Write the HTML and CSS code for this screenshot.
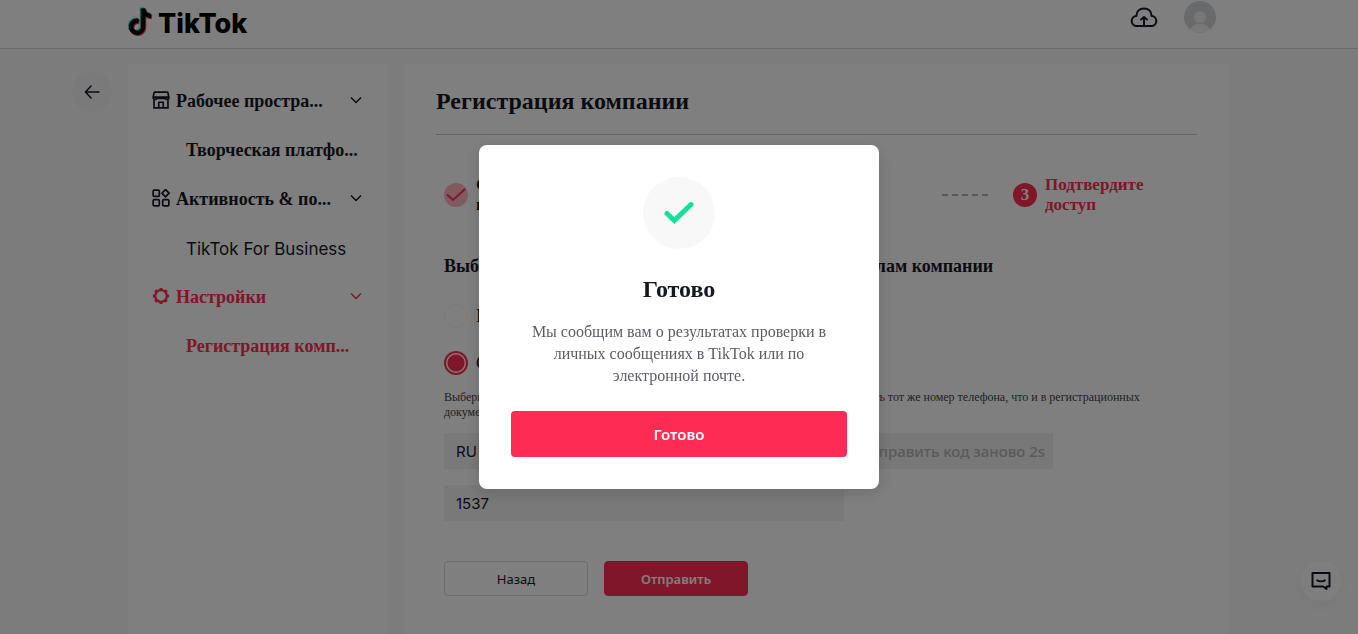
FILE: index.html
```html
<!DOCTYPE html>
<html lang="ru">
<head>
  <meta charset="UTF-8">
  <meta name="viewport" content="width=device-width, initial-scale=1.0">
  <title>TikTok - Регистрация компании</title>
  <link rel="stylesheet" href="styles.css">
</head>
<body>
  <header class="header">
    <a href="#" class="logo">
      <svg width="26" height="30" viewBox="0 0 26 30" fill="none" stroke-width="4.500">
        <g stroke="#25f4ee"><path d="M9.500 13a6 6 0 1 0 4.500 6V.5c.5 4.500 3.500 7 8 7.500"/></g>
        <g stroke="#fe2c55"><path d="M11.500 15a6 6 0 1 0 4.500 6V2.500c.5 4.500 3.500 7 8 7.500"/></g>
        <g stroke="#000"><path d="M10.500 14a6 6 0 1 0 4.500 6V1.500c.5 4.500 3.500 7 8 7.500"/></g>
      </svg>
      <span>TikTok</span>
    </a>
    <div class="header-right">
      <a href="#" class="upload" aria-label="Загрузить">
        <svg width="28" height="22" viewBox="0 0 28 22" fill="none" stroke="#161823" stroke-width="2" stroke-linecap="round" stroke-linejoin="round">
          <path d="M7 19a5 5 0 0 1-.6-10C6.500 4.500 9.500 1.500 14 1.500s7.500 3 7.600 7.500A5 5 0 0 1 21 19z"/>
          <path d="M14 18v-8M11 12.500 14 10l3 2.500"/>
        </svg>
      </a>
      <a href="#" class="avatar" aria-label="Профиль">
        <svg width="32" height="32" viewBox="0 0 32 32">
          <circle cx="16" cy="16" r="16" fill="#d2d4d6"/>
          <circle cx="16" cy="16" r="6" fill="#f1f1f2"/>
          <path d="M6 28.500c2-4 6-5.500 10-5.500s8 1.500 10 5.500a16 16 0 0 1-20 0z" fill="#f1f1f2"/>
        </svg>
      </a>
    </div>
  </header>

  <div class="layout">
    <button type="button" class="back" aria-label="Назад">
      <svg width="16" height="14" viewBox="0 0 16 14" fill="none" stroke="#161823" stroke-width="1.500" stroke-linecap="round" stroke-linejoin="round"><path d="M15 7H1.500M7 1 1.500 7 7 13"/></svg>
    </button>

    <nav class="sidebar">
      <a href="#" class="nav-item">
        <svg class="nav-icon" viewBox="0 0 16 16" fill="none" stroke="currentColor" stroke-width="1.500" stroke-linejoin="round"><path d="M2 1h12l1 4.500H1zM1 5.500c0 2.500 3.500 2.500 3.500 0M11.500 5.500c0 2.500 3.500 2.500 3.500 0M4.500 6.500h7M1.800 7.500V15h12.400V7.500M6 15v-5h4v5"/></svg>
        <span class="nav-text">Рабочее простра...</span>
        <svg class="chevron" viewBox="0 0 12 8" fill="none" stroke="currentColor" stroke-width="1.500"><path d="M1 1.500 6 6.500l5-5"/></svg>
      </a>
      <a href="#" class="nav-item sub"><span class="nav-text">Творческая платфо...</span></a>
      <a href="#" class="nav-item">
        <svg class="nav-icon" viewBox="0 0 16 16" fill="none" stroke="currentColor" stroke-width="1.500"><rect x="1" y="1" width="5.500" height="5.500" rx="1"/><path d="M12 .5 15.200 3.700 12 7 8.800 3.700z"/><rect x="1" y="9.500" width="5.500" height="5.500" rx="1"/><rect x="9.500" y="9.500" width="5.500" height="5.500" rx="1"/></svg>
        <span class="nav-text">Активность &amp; по...</span>
        <svg class="chevron" viewBox="0 0 12 8" fill="none" stroke="currentColor" stroke-width="1.500"><path d="M1 1.500 6 6.500l5-5"/></svg>
      </a>
      <a href="#" class="nav-item sub latin"><span class="nav-text">TikTok For Business</span></a>
      <a href="#" class="nav-item active">
        <svg class="nav-icon" viewBox="0 0 16 16" fill="none" stroke="currentColor"><circle cx="8" cy="8" r="5.200" stroke-width="2"/><path d="M8 .8v2M8 13.200v2M.8 8h2M13.200 8h2M2.900 2.900l1.400 1.400M11.700 11.700l1.400 1.400M2.900 13.100l1.400-1.400M11.700 4.300l1.400-1.400" stroke-width="2.600"/></svg>
        <span class="nav-text">Настройки</span>
        <svg class="chevron" viewBox="0 0 12 8" fill="none" stroke="currentColor" stroke-width="1.500"><path d="M1 1.500 6 6.500l5-5"/></svg>
      </a>
      <a href="#" class="nav-item sub active"><span class="nav-text">Регистрация комп...</span></a>
    </nav>

    <main class="content">
      <h1>Регистрация компании</h1>

      <form class="form">
        <ol class="steps">
          <li class="step">
            <span class="step-mark done"><svg width="20" height="14" viewBox="0 0 20 14" fill="none" stroke="#fe2c55" stroke-width="2"><path d="M1 6.500 7 12 19 1"/></svg></span>
            <span>Сведения<br>компании</span>
          </li>
          <li class="dashes"></li>
          <li class="step middle">
            <span class="step-mark done"><svg width="20" height="14" viewBox="0 0 20 14" fill="none" stroke="#fe2c55" stroke-width="2"><path d="M1 6.500 7 12 19 1"/></svg></span>
            <span>Загрузите<br>документы</span>
          </li>
          <li class="dashes"></li>
          <li class="step current">
            <span class="step-mark">3</span>
            <span>Подтвердите доступ</span>
          </li>
        </ol>

        <h2>Выберите способ подтверждения доступа к всем отделам компании</h2>

        <label class="option"><input type="radio" name="method"> По почте</label>
        <label class="option"><input type="radio" name="method" checked> С помощью СМС</label>

        <p class="note">Выберите номер мобильного телефона для получения кода. Необходимо использовать тот же номер телефона, что и в регистрационных документах.</p>

        <div class="phone-row">
          <input type="text" class="field" value="RU +7" aria-label="Номер телефона">
          <button type="button" class="resend" disabled>Отправить код заново 2s</button>
        </div>
        <input type="text" class="field" value="1537" aria-label="Код подтверждения">

        <div class="actions">
          <button type="button" class="btn">Назад</button>
          <button type="button" class="btn primary">Отправить</button>
        </div>
      </form>
    </main>
  </div>

  <button type="button" class="feedback" aria-label="Обратная связь">
    <svg width="20" height="20" viewBox="0 0 20 20" fill="none" stroke="#161823" stroke-width="2" stroke-linejoin="round"><path d="M1.500 2h17v13.500h-3V18L12 15.500H1.500z"/><path d="M5.500 9c2.500 1.800 6.500 1.800 9 0"/></svg>
  </button>

  <!-- Success popup -->
  <div class="overlay">
    <div class="modal" role="dialog" aria-modal="true" aria-labelledby="modal-title">
      <div class="modal-icon">
        <svg width="32" height="24" viewBox="0 0 32 24" fill="none" stroke="#13e09b" stroke-width="5" stroke-linecap="round" stroke-linejoin="miter"><path d="M4 12.500 11.300 19.500 28 3.500"/></svg>
      </div>
      <h2 id="modal-title" class="modal-title">Готово</h2>
      <p class="modal-text">Мы сообщим вам о результатах проверки в личных сообщениях в TikTok или по электронной почте.</p>
      <button type="button" class="modal-btn">Готово</button>
    </div>
  </div>
</body>
</html>
```
FILE: styles.css
```css
* {
  box-sizing: border-box;
}

body {
  margin: 0;
  min-height: 100vh;
  display: flex;
  flex-direction: column;
  background: #f8f8f8;
  color: #161823;
  font-family: 'Liberation Serif', 'Times New Roman', serif;
}

a {
  color: inherit;
  text-decoration: none;
}

button,
input {
  font-family: 'Noto Sans', sans-serif;
}

/* Header */
.header {
  display: flex;
  justify-content: space-between;
  height: 49px;
  padding: 0 142px 0 128px;
  background: #fff;
  border-bottom: 1px solid #d8d8d8;
}

.logo {
  display: flex;
  align-items: center;
  gap: 4px;
  padding-bottom: 4px;
  color: #000;
  font: 800 27px/30px Inter, sans-serif;
}

.logo span {
  padding-top: 3px;
}

.header-right {
  display: flex;
  gap: 26px;
}

.upload {
  padding-top: 7px;
}

.avatar {
  padding-top: 1px;
}

/* Page layout */
.layout {
  flex: 1;
  display: flex;
  gap: 16px;
  padding: 15px 129px 0 72px;
}

.back {
  display: flex;
  align-items: center;
  justify-content: center;
  width: 40px;
  height: 40px;
  margin-top: 8px;
  border: none;
  border-radius: 50%;
  background: #f4f4f4;
}

.sidebar {
  width: 260px;
  padding: 13px 24px;
  background: #fff;
}

.nav-item {
  display: flex;
  align-items: center;
  gap: 6px;
  height: 49px;
  font-size: 18px;
  font-weight: bold;
}

.nav-icon {
  flex: none;
  width: 18px;
  height: 18px;
  margin-bottom: 4px;
}

.nav-text {
  flex: 1;
  overflow: hidden;
  white-space: nowrap;
  text-overflow: ellipsis;
}

.chevron {
  flex: none;
  width: 12px;
  height: 8px;
  margin: 0 2px 4px 0;
}

.sub {
  padding-left: 34px;
}

.latin {
  font: 17px Inter, sans-serif;
}

.active {
  color: #fe2c55;
}

/* Content */
.content {
  flex: 1;
  padding: 0 32px;
  background: #fff;
}

h1 {
  margin: 0;
  padding: 22px 0 18px;
  border-bottom: 1px solid #c8c8c8;
  font-size: 24px;
  line-height: 30px;
}

.form {
  padding: 40px 8px;
}

.steps {
  display: flex;
  align-items: center;
  gap: 23px;
  margin: 0;
  padding: 0;
  list-style: none;
  font-size: 17px;
  font-weight: bold;
  line-height: 20px;
}

.step {
  display: flex;
  align-items: center;
  gap: 8px;
  width: 176px;
}

.middle {
  flex: 1;
}

.step-mark {
  flex: none;
  display: flex;
  align-items: center;
  justify-content: center;
  width: 24px;
  height: 24px;
  border-radius: 50%;
  background: #fe2c55;
  color: #fff;
}

.done {
  background: #ffb4c3;
}

.current {
  color: #fe2c55;
}

.dashes {
  width: 48px;
  height: 2px;
  background: repeating-linear-gradient(90deg, #b0b0b0 0 6px, transparent 6px 10px);
}

.form h2 {
  margin: 39px 0 26px;
  font-size: 18px;
  line-height: 24px;
}

.option {
  display: flex;
  align-items: center;
  gap: 8px;
  height: 24px;
  margin-bottom: 23px;
  font-size: 18px;
}

.option input {
  appearance: none;
  width: 24px;
  height: 24px;
  margin: 0;
  border: 2px solid #fafafa;
  border-radius: 50%;
}

.option input:checked {
  border-color: #fe2c55;
  background: radial-gradient(circle, #fe2c55 8px, #fff 9px);
}

.note {
  margin: -8px 0 13px;
  color: #444;
  font-size: 12px;
  line-height: 15px;
}

.phone-row {
  display: flex;
  gap: 8px;
  margin-bottom: 16px;
}

.field {
  width: 400px;
  height: 36px;
  padding: 0 12px;
  border: none;
  background: #f3f3f3;
  color: #161823;
  font-family: Inter, sans-serif;
  font-size: 15px;
}

.resend {
  height: 36px;
  padding: 0 8px;
  border: none;
  background: #f0f0f0;
  color: #b4b4b4;
  font-size: 15px;
  font-weight: 500;
}

.actions {
  display: flex;
  gap: 16px;
  margin-top: 40px;
}

.btn {
  width: 144px;
  height: 35px;
  border: 1px solid #d8d8d8;
  border-radius: 4px;
  background: #fff;
  color: #161823;
  font-size: 13px;
}

.primary {
  border-color: #fe2c55;
  background: #fe2c55;
  color: #fff;
  font-weight: 600;
}

.feedback {
  position: fixed;
  right: 17px;
  bottom: 33px;
  display: flex;
  align-items: center;
  justify-content: center;
  width: 40px;
  height: 40px;
  border: none;
  border-radius: 50%;
  background: #fdfdfd;
  box-shadow: 0 4px 12px rgba(0, 0, 0, 0.03);
}

/* Popup */
.overlay {
  position: fixed;
  inset: 0;
  display: flex;
  align-items: center;
  justify-content: center;
  background: rgba(0, 0, 0, 0.5);
}

.modal {
  display: flex;
  flex-direction: column;
  align-items: center;
  width: 400px;
  padding: 32px;
  border-radius: 8px;
  background: #fff;
  box-shadow: 0 4px 16px rgba(0, 0, 0, 0.15);
}

.modal-icon {
  display: flex;
  align-items: center;
  justify-content: center;
  width: 72px;
  height: 72px;
  border-radius: 50%;
  background: #f8f8f8;
}

.modal-title {
  margin: 23px 0 15px;
  font-size: 24px;
  line-height: 34px;
}

.modal-text {
  margin: 0 16px 24px;
  color: #5c5d65;
  font-size: 16px;
  line-height: 22px;
  text-align: center;
}

.modal-btn {
  width: 100%;
  height: 46px;
  border: none;
  border-radius: 4px;
  background: #fe2c55;
  color: #fff;
  font-size: 15px;
  font-weight: 600;
}
```
